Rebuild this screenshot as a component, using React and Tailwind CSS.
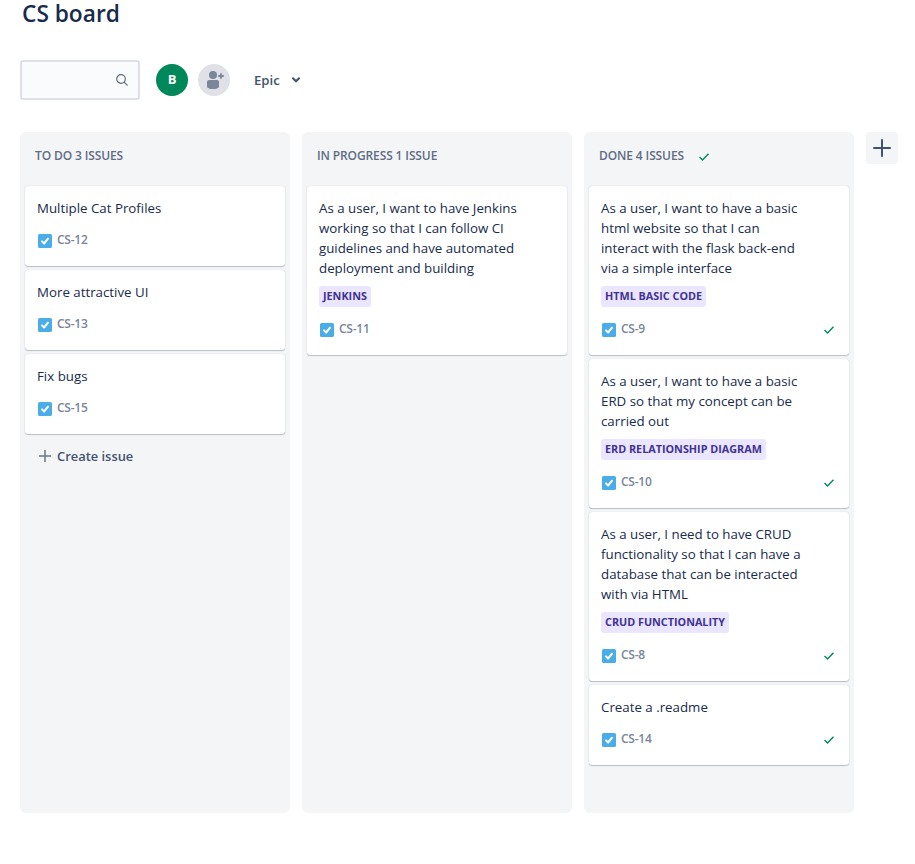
const columns = [
  {
    title: 'TO DO 3 ISSUES',
    create: true,
    issues: [
      { key: 'CS-12', lines: ['Multiple Cat Profiles'] },
      { key: 'CS-13', lines: ['More attractive UI'] },
      { key: 'CS-15', lines: ['Fix bugs'] },
    ],
  },
  {
    title: 'IN PROGRESS 1 ISSUE',
    issues: [
      {
        key: 'CS-11',
        lines: [
          'As a user, I want to have Jenkins',
          'working so that I can follow CI',
          'guidelines and have automated',
          'deployment and building',
        ],
        epic: 'JENKINS',
      },
    ],
  },
  {
    title: 'DONE 4 ISSUES',
    done: true,
    issues: [
      {
        key: 'CS-9',
        lines: [
          'As a user, I want to have a basic',
          'html website so that I can',
          'interact with the flask back-end',
          'via a simple interface',
        ],
        epic: 'HTML BASIC CODE',
      },
      {
        key: 'CS-10',
        lines: ['As a user, I want to have a basic', 'ERD so that my concept can be', 'carried out'],
        epic: 'ERD RELATIONSHIP DIAGRAM',
      },
      {
        key: 'CS-8',
        lines: [
          'As a user, I need to have CRUD',
          'functionality so that I can have a',
          'database that can be interacted',
          'with via HTML',
        ],
        epic: 'CRUD FUNCTIONALITY',
      },
      { key: 'CS-14', lines: ['Create a .readme'] },
    ],
  },
];

function DoneCheck() {
  return (
    <svg width="10" height="8" viewBox="0 0 10 8" fill="none" stroke="#00875a" strokeWidth="1.4">
      <path d="M.5 3.900 3.500 6.900 9.500.7" />
    </svg>
  );
}

function TaskIcon() {
  return (
    <svg className="shrink-0" width="14" height="14" viewBox="0 0 14 14">
      <rect width="14" height="14" rx="1.6" fill="#4bade8" />
      <path d="M4 7.4 6.1 9.5 10 4.7" fill="none" stroke="#fff" strokeWidth="2" strokeLinecap="round" strokeLinejoin="round" />
    </svg>
  );
}

function Card({ issue, done }) {
  return (
    <article className="rounded-[3px] bg-white px-3 pt-3 pb-[18px] shadow-[0_1px_1px_rgba(9,30,66,0.23),0_0_1px_rgba(9,30,66,0.25)]">
      <p className="text-[13.3px] leading-5 whitespace-nowrap text-[#172b4d]">
        {issue.lines.map((line) => (
          <span key={line} className="block">{line}</span>
        ))}
      </p>
      {issue.epic && (
        <div className="mt-2 flex">
          <span className="h-[21px] rounded-[3px] bg-[#eae6ff] px-1 text-[10.8px] leading-[20px] font-bold whitespace-nowrap text-[#403294]">
            {issue.epic}
          </span>
        </div>
      )}
      <div className="mt-3.5 flex h-4 items-center pr-[3px] pl-px">
        <div className="pt-0.5"><TaskIcon /></div>
        <span className="ml-[5px] text-[12px] leading-4 font-semibold tracking-[-0.25px] text-[#7a869a]">{issue.key}</span>
        {done && <div className="ml-auto pt-px"><DoneCheck /></div>}
      </div>
    </article>
  );
}

function Column({ column }) {
  return (
    <section className="flex h-[681px] w-[270px] shrink-0 flex-col rounded-md bg-[#f4f5f7] px-[5px]">
      <header className="flex h-[54px] items-center gap-[15px] pb-[6px] pl-2.5">
        <h2 className="text-[12px] leading-4 font-semibold tracking-[-0.12px] whitespace-nowrap text-[#5e6c84]">{column.title}</h2>
        {column.done && <div className="pt-0.5"><DoneCheck /></div>}
      </header>
      <div className="flex flex-col gap-1">
        {column.issues.map((issue) => (
          <Card key={issue.key} issue={issue} done={column.done} />
        ))}
      </div>
      {column.create && (
        <button className="mt-3 flex h-5 items-center gap-1.5 pl-3.5 text-[12.9px] font-semibold text-[#42526e]">
          <svg width="12" height="12" viewBox="0 0 12 12" stroke="#6b778c" strokeWidth="1.5">
            <path d="M6 0v12M0 6h12" />
          </svg>
          <span className="pt-px">Create issue</span>
        </button>
      )}
    </section>
  );
}

export default function App() {
  return (
    <main className="h-[864px] w-[915px] bg-white pl-5 font-['Open_Sans',sans-serif]">
      <h1 className="h-[60px] pl-0.5 text-[22.7px] leading-[28px] font-semibold text-[#172b4d]">CS board</h1>
      <div className="flex h-10 items-center">
        <div className="flex h-10 w-[120px] items-center justify-end rounded-[3px] border-2 border-[#dfe1e6] bg-[#fafbfc] pr-2.5">
          <svg width="12" height="12" viewBox="0 0 12 12" fill="none" stroke="#5e6c84" strokeWidth="1.2">
            <circle cx="5" cy="5" r="4.3" />
            <path d="m8.2 8.2 3 3" strokeLinecap="round" />
          </svg>
        </div>
        <div className="ml-4 flex size-8 items-center justify-center rounded-full bg-[#00875a] text-[13px] font-bold text-white">B</div>
        <div className="ml-2.5 flex size-8 items-center justify-center rounded-full bg-[#dfe1e6]">
          <svg width="32" height="32" viewBox="0 0 32 32" fill="#7a869a">
            <circle cx="15" cy="11" r="4" />
            <path d="M9 18a2 2 0 0 1 2-2h8a2 2 0 0 1 2 2v4.200c0 1.900-2.500 2.800-6 2.800s-6-.9-6-2.800z" />
            <path d="M23 9.900v4.200M20.900 12h4.200" stroke="#7a869a" strokeWidth="1.800" strokeLinecap="round" />
          </svg>
        </div>
        <button className="ml-6 flex items-center gap-3 text-[13.2px] font-semibold text-[#42526e]">
          <span className="pt-px">Epic</span>
          <svg width="8" height="6" viewBox="0 0 8 6" fill="none" stroke="#42526e" strokeWidth="2" strokeLinecap="round" strokeLinejoin="round">
            <path d="m1 1.300 3 3 3-3" />
          </svg>
        </button>
      </div>
      <div className="mt-8 flex items-start gap-3">
        {columns.map((column) => (
          <Column key={column.title} column={column} />
        ))}
        <button className="flex size-8 shrink-0 items-center justify-center rounded-[3px] bg-[#f4f5f7]">
          <svg width="18" height="18" viewBox="0 0 18 18" stroke="#42526e" strokeWidth="2" strokeLinecap="round">
            <path d="M9 1v16M1 9h16" />
          </svg>
        </button>
      </div>
    </main>
  );
}
